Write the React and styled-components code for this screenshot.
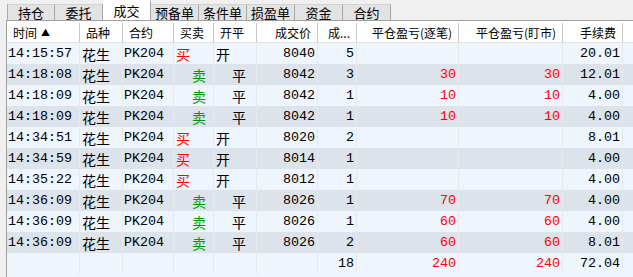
import React from 'react';
import styled, { createGlobalStyle } from 'styled-components';

const GlobalStyle = createGlobalStyle`
  html, body {
    margin: 0;
    padding: 0;
    background: #f0f0f0;
    overflow: hidden;
  }
`;

const COLS = '73px 43px 51px 40px 43px 61px 39px 102px 104px 60px 1fr';

const Page = styled.div`
  width: 633px;
  height: 277px;
  display: flex;
  flex-direction: column;
  background: #f0f0f0;
  font-family: "Noto Sans CJK SC", "Liberation Sans", sans-serif;
`;

const TabBar = styled.div`
  display: flex;
  align-items: flex-end;
  height: 20px;
  padding-left: 7px;
  flex-shrink: 0;
`;

const Tab = styled.div`
  box-sizing: border-box;
  width: 48px;
  height: ${p => (p.$active ? '20px' : '16px')};
  background: ${p => (p.$active ? '#ffffff' : '#e3e3e3')};
  border-top: 1px solid ${p => (p.$active ? '#ffffff' : '#d2d2d2')};
  border-right: 1px solid #a8a8a8;
  border-left: ${p => (p.$first ? '1px solid #a8a8a8' : 'none')};
  display: flex;
  align-items: center;
  justify-content: center;
  font-size: 13px;
  color: #000;
  line-height: 1;
`;

const Grid = styled.div`
  flex: 1;
  margin-left: 6px;
  border-left: 1px solid #a0a0a0;
  border-top: 1px solid #a0a0a0;
  background: #eef5fc;
  overflow: hidden;
`;

const HeaderRow = styled.div`
  display: grid;
  grid-template-columns: ${COLS};
  height: 22px;
  background: #ffffff;
  border-bottom: 1px solid #e2e2e2;
  box-sizing: border-box;
`;

const HeadCell = styled.div`
  box-sizing: border-box;
  border-right: ${p => (p.$last ? 'none' : '1px solid #c9c9c9')};
  margin: 2px 0 0;
  padding: ${p => (p.$right ? '0 6px 0 0' : '0 0 0 6px')};
  display: flex;
  align-items: center;
  justify-content: ${p => (p.$right ? 'flex-end' : 'flex-start')};
  font-size: 12px;
  color: #000;
  white-space: nowrap;
  overflow: hidden;
`;

const SortMark = styled.span`
  font-size: 9px;
  margin-left: 4px;
`;

const Row = styled.div`
  display: grid;
  grid-template-columns: ${COLS};
  height: 21px;
  background: ${p => (p.$alt ? '#dde3ea' : '#eef5fc')};
`;

const Cell = styled.div`
  box-sizing: border-box;
  border-right: ${p => (p.$last ? 'none' : '1px solid #e6e8ea')};
  display: flex;
  align-items: center;
  justify-content: ${p => (p.$right ? 'flex-end' : 'flex-start')};
  padding: ${p => (p.$right ? '0 2px 0 0' : `0 0 0 ${p.$indent || 1}px`)};
  font-family: ${p => (p.$cjk ? '"Noto Sans CJK SC", sans-serif' : '"Liberation Mono", "Noto Sans CJK SC", monospace')};
  font-size: ${p => (p.$cjk ? '14px' : '13.33px')};
  color: ${p => p.$color || '#000'};
  white-space: nowrap;
  overflow: hidden;
`;

const tabs = ['持仓', '委托', '成交', '预备单', '条件单', '损盈单', '资金', '合约'];

const headers = [
  { t: '时间', sort: true },
  { t: '品种' },
  { t: '合约' },
  { t: '买卖' },
  { t: '开平' },
  { t: '成交价', right: true },
  { t: '成...', right: true },
  { t: '平仓盈亏(逐笔)', right: true },
  { t: '平仓盈亏(盯市)', right: true },
  { t: '手续费', right: true },
];

const trades = [
  ['14:15:57', '买', '8040', '5', '', '', '20.01'],
  ['14:18:08', '卖', '8042', '3', '30', '30', '12.01'],
  ['14:18:09', '卖', '8042', '1', '10', '10', '4.00'],
  ['14:18:09', '卖', '8042', '1', '10', '10', '4.00'],
  ['14:34:51', '买', '8020', '2', '', '', '8.01'],
  ['14:34:59', '买', '8014', '1', '', '', '4.00'],
  ['14:35:22', '买', '8012', '1', '', '', '4.00'],
  ['14:36:09', '卖', '8026', '1', '70', '70', '4.00'],
  ['14:36:09', '卖', '8026', '1', '60', '60', '4.00'],
  ['14:36:09', '卖', '8026', '2', '60', '60', '8.01'],
];

const RED = '#ff0000';
const GREEN = '#009a00';

function TradeRow({ trade, alt }) {
  const [time, side, price, qty, pnl1, pnl2, fee] = trade;
  const buy = side === '买';
  return (
    <Row $alt={alt}>
      <Cell>{time}</Cell>
      <Cell $cjk $indent={2}>花生</Cell>
      <Cell $indent={1}>PK204</Cell>
      <Cell $cjk $indent={buy ? 2 : 18} $color={buy ? RED : GREEN}>{side}</Cell>
      <Cell $cjk $indent={buy ? 2 : 18}>{buy ? '开' : '平'}</Cell>
      <Cell $right>{price}</Cell>
      <Cell $right>{qty}</Cell>
      <Cell $right $color={RED}>{pnl1}</Cell>
      <Cell $right $color={RED}>{pnl2}</Cell>
      <Cell $right>{fee}</Cell>
      <Cell $last />
    </Row>
  );
}

export default function App() {
  return (
    <Page>
      <GlobalStyle />
      <TabBar>
        {tabs.map((t, i) => (
          <Tab key={t} $active={t === '成交'} $first={i === 0}>{t}</Tab>
        ))}
      </TabBar>
      <Grid>
        <HeaderRow>
          {headers.map(h => (
            <HeadCell key={h.t} $right={h.right}>
              {h.t}
              {h.sort && <SortMark>▲</SortMark>}
            </HeadCell>
          ))}
          <HeadCell $last />
        </HeaderRow>
        {trades.map((tr, i) => (
          <TradeRow key={i} trade={tr} alt={i % 2 === 1} />
        ))}
        <Row>
          <Cell /><Cell /><Cell /><Cell /><Cell /><Cell />
          <Cell $right>18</Cell>
          <Cell $right $color={RED}>240</Cell>
          <Cell $right $color={RED}>240</Cell>
          <Cell $right>72.04</Cell>
          <Cell $last />
        </Row>
      </Grid>
    </Page>
  );
}
